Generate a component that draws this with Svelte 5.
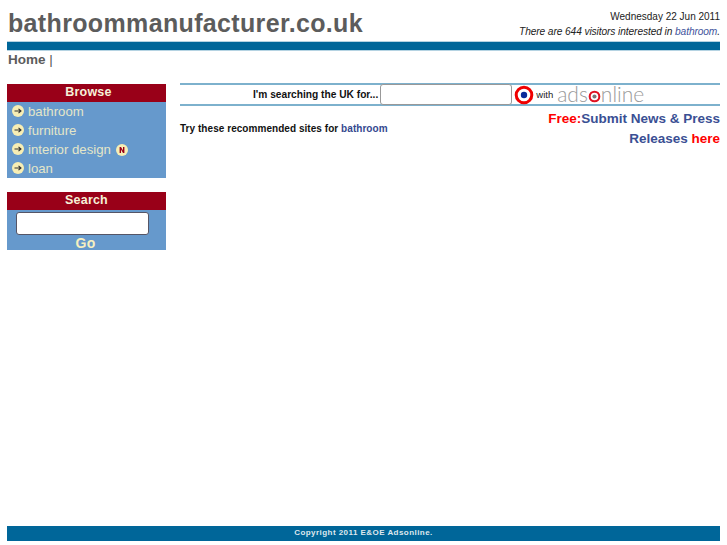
<script>
  const browseLinks = [
    { label: "bathroom" },
    { label: "furniture" },
    { label: "interior design", isNew: true },
    { label: "loan" },
  ];
</script>

<div class="page">
  <header class="top">
    <h1>bathroommanufacturer.co.uk</h1>
    <div class="info">
      <div class="date">Wednesday 22 Jun 2011</div>
      <div class="visitors">There are 644 visitors interested in <a href="#top">bathroom</a>.</div>
    </div>
  </header>
  <div class="bar"></div>
  <nav class="crumbs"><a href="#top">Home</a> <span>|</span></nav>

  <div class="columns">
    <aside>
      <section class="box browse">
        <h2>Browse</h2>
        <ul>
          {#each browseLinks as link}
            <li>
              <svg class="arrow" viewBox="0 0 12 12" width="12" height="12">
                <circle cx="6" cy="6" r="6" fill="#f7eeb4" />
                <path d="M2.5 6H9M6.5 3.8 9 6 6.5 8.2" fill="none" stroke="#333" stroke-width="1.1" />
              </svg>
              <a href="#top">{link.label}</a>
              {#if link.isNew}
                <svg class="new" viewBox="0 0 12 12" width="12" height="12">
                  <circle cx="6" cy="6" r="6" fill="#f7eeb4" />
                  <path d="M3.6 9V3H5L7 6.4V3H8.4V9H7L5 5.6V9Z" fill="#990018" />
                </svg>
              {/if}
            </li>
          {/each}
        </ul>
      </section>

      <section class="box search">
        <h2>Search</h2>
        <div class="search-body">
          <input type="text" />
          <button type="button">Go</button>
        </div>
      </section>
    </aside>

    <main>
      <div class="search-strip">
        <label for="uk-search">I'm searching the UK for...</label>
        <input id="uk-search" type="text" />
        <svg class="target" viewBox="0 0 20 20" width="20" height="20">
          <circle cx="10" cy="10" r="7.8" fill="#fff" stroke="#f00000" stroke-width="3" />
          <circle cx="10" cy="10" r="3.2" fill="#0a2a9a" />
        </svg>
        <span class="with">with</span>
        <span class="logo">ads<svg viewBox="0 0 14 14" width="13" height="13">
            <circle cx="7" cy="7" r="5.2" fill="#fff" stroke="#e01020" stroke-width="2.2" />
            <circle cx="7" cy="7" r="2.2" fill="#777" />
          </svg>nline</span>
      </div>

      <div class="content">
        <p class="try">Try these recommended sites for <a href="#top">bathroom</a></p>
        <div class="promo">
          <div><em>Free:</em>Submit News &amp; Press</div>
          <div>Releases <em>here</em></div>
        </div>
      </div>
    </main>
  </div>

  <footer>Copyright 2011 E&amp;OE Adsonline.</footer>
</div>

<style>
  :global(body) {
    margin: 0;
    background: #fff;
    font-family: "Liberation Sans", Arial, sans-serif;
  }

  a {
    text-decoration: none;
  }

  .page {
    box-sizing: border-box;
    height: 545px;
    padding: 0 7px 4px;
    display: flex;
    flex-direction: column;
    overflow: hidden;
  }

  .top {
    height: 41px;
    display: flex;
    justify-content: space-between;
  }

  h1 {
    margin: 9px 0 0 1px;
    font-size: 25px;
    line-height: 29px;
    font-weight: bold;
    letter-spacing: 0.35px;
    color: #5c5c5c;
  }

  .info {
    padding-top: 10px;
    text-align: right;
    font-size: 10px;
    line-height: 14px;
    color: #222;
  }

  .visitors {
    margin-top: 1px;
    font-style: italic;
    font-size: 10.2px;
    letter-spacing: -0.1px;
  }

  .visitors a {
    color: #42549c;
  }

  .bar {
    height: 8px;
    background: #006699;
    border: 1px solid #b5d3e2;
    border-width: 1px 0;
  }

  .crumbs {
    height: 32px;
    padding: 1px 0 0 1px;
    box-sizing: border-box;
    font-size: 13.5px;
    line-height: 16px;
    color: #555;
  }

  .crumbs a {
    font-weight: bold;
    color: #5c5c5c;
  }

  .columns {
    flex: 1;
    display: flex;
    gap: 14px;
  }

  aside {
    width: 159px;
    flex: none;
    display: flex;
    flex-direction: column;
    gap: 14px;
    padding-top: 1px;
  }

  .box {
    background: #6699cc;
  }

  h2 {
    margin: 0;
    height: 18px;
    background: #990018;
    color: #f6f0d8;
    font-size: 12.5px;
    line-height: 17px;
    text-align: center;
    font-weight: bold;
    letter-spacing: 0.2px;
  }

  .browse h2 {
    padding-left: 4px;
  }

  ul {
    list-style: none;
    margin: 0;
    padding: 0;
  }

  li {
    box-sizing: border-box;
    height: 19px;
    padding-bottom: 1px;
    display: flex;
    align-items: center;
    padding-left: 5px;
    font-size: 13.2px;
  }

  li a {
    margin-left: 4px;
    color: #e4e6c8;
  }

  .new {
    margin-left: 5px;
    margin-top: 2px;
  }

  .search-body {
    display: flex;
    flex-direction: column;
    align-items: center;
    padding-top: 2px;
  }

  .search-body input {
    box-sizing: border-box;
    width: 133px;
    height: 23px;
    margin-right: 8px;
    background: #fff;
    border: 1px solid #556;
    border-radius: 3px;
  }

  .search-body button {
    height: 15px;
    padding: 1px 0 0;
    margin-right: 2px;
    border: none;
    background: none;
    color: #f6f0c0;
    font: bold 14px/15px "Liberation Sans", Arial, sans-serif;
    letter-spacing: 0.4px;
  }

  main {
    flex: 1;
    min-width: 0;
  }

  .search-strip {
    box-sizing: border-box;
    height: 23px;
    display: flex;
    align-items: center;
    border: 2px solid #7db1cd;
    border-width: 2px 0;
    padding-left: 73px;
  }

  label {
    font-size: 10.2px;
    font-weight: bold;
    color: #111;
    white-space: nowrap;
  }

  .search-strip input {
    box-sizing: border-box;
    width: 132px;
    height: 21px;
    margin-left: 2px;
    background: #fff;
    border: 1px solid #999;
    border-radius: 3px;
  }

  .target {
    margin-left: 2px;
  }

  .with {
    margin-left: 2px;
    font-size: 9.5px;
    color: #222;
  }

  .logo {
    margin-left: 4px;
    padding-bottom: 1px;
    display: flex;
    align-items: center;
    font-family: Lato, sans-serif;
    font-weight: 300;
    font-size: 21px;
    line-height: 20px;
    color: #9a9a9a;
  }

  .logo svg {
    margin-top: 4px;
  }

  .content {
    display: flex;
    justify-content: space-between;
    align-items: flex-start;
  }

  .try {
    margin: 17px 0 0;
    font-size: 10px;
    font-weight: bold;
    letter-spacing: 0.05px;
    color: #111;
  }

  .try a {
    color: #34498f;
  }

  .promo {
    margin: 3px 0 0;
    text-align: right;
    font-size: 13.5px;
    line-height: 19.5px;
    font-weight: bold;
    color: #3a4f94;
  }

  .promo em {
    font-style: normal;
    color: #f00;
  }

  footer {
    height: 15px;
    flex: none;
    background: #006699;
    color: #dfe8ee;
    text-align: center;
    font-size: 8px;
    line-height: 14px;
    font-weight: bold;
    letter-spacing: 0.45px;
  }
</style>
